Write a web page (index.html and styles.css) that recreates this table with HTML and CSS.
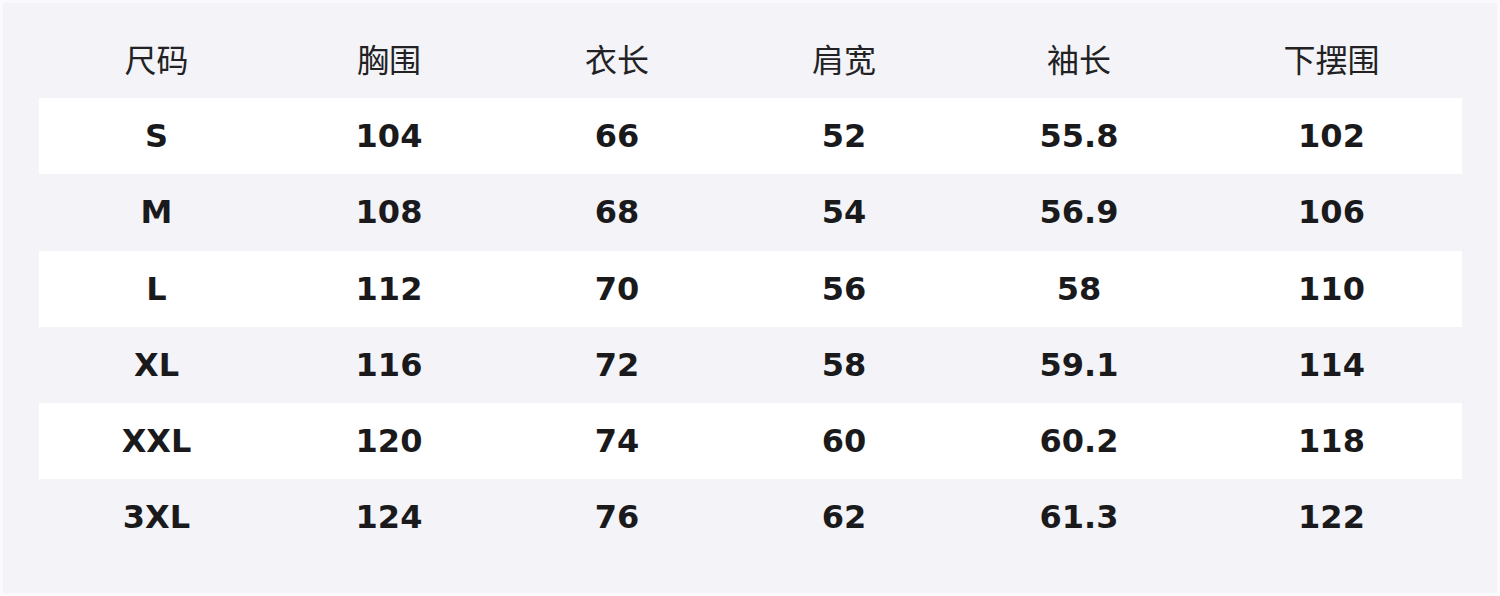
FILE: index.html
```html
<!DOCTYPE html>
<html lang="zh">
<head>
<meta charset="utf-8">
<link rel="stylesheet" href="styles.css">
</head>
<body>
<div class="frame">
  <div class="sheet">
    <div class="row head">
      <div>尺码</div><div>胸围</div><div>衣长</div><div>肩宽</div><div>袖长</div><div>下摆围</div>
    </div>
    <div class="row light">
      <div>S</div><div>104</div><div>66</div><div>52</div><div>55.8</div><div>102</div>
    </div>
    <div class="row">
      <div>M</div><div>108</div><div>68</div><div>54</div><div>56.9</div><div>106</div>
    </div>
    <div class="row light">
      <div>L</div><div>112</div><div>70</div><div>56</div><div>58</div><div>110</div>
    </div>
    <div class="row">
      <div>XL</div><div>116</div><div>72</div><div>58</div><div>59.1</div><div>114</div>
    </div>
    <div class="row light">
      <div>XXL</div><div>120</div><div>74</div><div>60</div><div>60.2</div><div>118</div>
    </div>
    <div class="row">
      <div>3XL</div><div>124</div><div>76</div><div>62</div><div>61.3</div><div>122</div>
    </div>
  </div>
</div>
</body>
</html>
```

FILE: styles.css
```css
html, body {
  margin: 0;
  padding: 0;
  background: #fafafc;
}
.frame {
  width: 1500px;
  height: 596px;
  box-sizing: border-box;
  padding: 3px;
}
.sheet {
  height: 100%;
  box-sizing: border-box;
  background: #f3f3f8;
  padding: 19px 35px 0 36px;
}
.row {
  display: grid;
  grid-template-columns: 235px 230px 226px 228px 242px 263px;
  height: 76.2px;
  box-sizing: border-box;
  align-items: center;
  text-align: center;
  font-family: "DejaVu Sans", "Noto Sans CJK SC", sans-serif;
  font-weight: bold;
  font-size: 32px;
  color: #1a1a1c;
}
.row.head {
  font-family: "Noto Sans CJK SC", sans-serif;
  font-weight: normal;
  font-size: 32px;
  color: #222224;
  padding-bottom: 4px;
}
.row.light {
  background: #ffffff;
}
```
